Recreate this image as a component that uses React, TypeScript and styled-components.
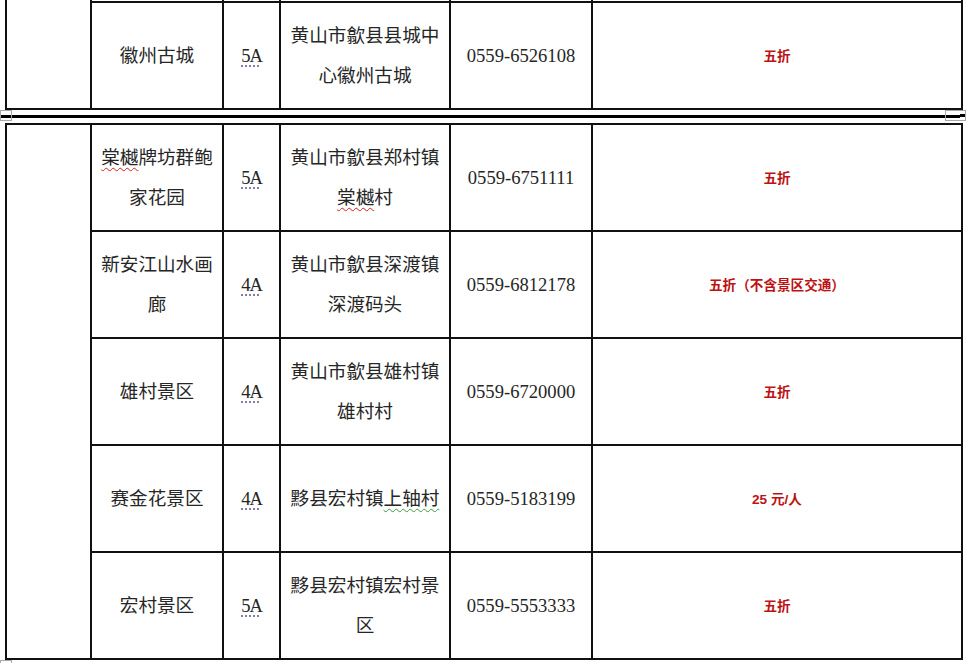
import React from 'react'
import styled, { createGlobalStyle } from 'styled-components'

const GlobalStyle = createGlobalStyle`
  html, body {
    margin: 0;
    padding: 0;
    background: #ffffff;
  }
`

const Page = styled.div`
  width: 966px;
  height: 663px;
  overflow: hidden;
  position: relative;
  background: #ffffff;
  font-family: "Liberation Serif", "Noto Sans CJK SC", serif;
  color: #262626;
`

const Sheet = styled.table`
  border-collapse: collapse;
  table-layout: fixed;
  width: 956px;
  margin-left: 5px;
`

const Cell = styled.td<{ $cut?: boolean }>`
  border: 2px solid #111111;
  ${({ $cut }) => $cut && 'border-top: none;'}
  padding: 0 8px;
  text-align: center;
  vertical-align: middle;
  font-size: 18.6px;
  line-height: 40px;
  white-space: nowrap;
`

const Row = styled.tr<{ $h: number }>`
  height: ${({ $h }) => $h}px;
`

const Level = styled.span`
  text-decoration: underline dotted #7d72a8;
  text-underline-offset: 4px;
  letter-spacing: -1px;
`

const Spell = styled.span<{ $tone: 'red' | 'green' }>`
  text-decoration: underline wavy ${({ $tone }) => ($tone === 'red' ? '#d42020' : '#3c9a3c')};
  text-decoration-thickness: 1px;
  text-underline-offset: 3px;
`

const Deal = styled.span`
  font-family: "Liberation Sans", "Noto Sans CJK SC", sans-serif;
  font-weight: 700;
  font-size: 13.6px;
  color: #bd1212;
`

const Break = styled.div`
  position: relative;
  height: 13px;
  display: flex;
  align-items: center;
`

const BreakLine = styled.div`
  width: 960px;
  height: 3px;
  background: #000000;
`

const Handle = styled.span<{ $side: 'left' | 'right' }>`
  position: absolute;
  top: 0;
  ${({ $side }) => ($side === 'left' ? 'left: 0; width: 12px;' : 'right: 0; width: 21px;')}
  height: 11px;
  border: 1px solid #a9a9a9;
  box-sizing: border-box;
  background: transparent;

  ${({ $side }) =>
    $side === 'right' &&
    `&::after {
      content: '';
      position: absolute;
      right: 0;
      top: 3px;
      width: 5px;
      height: 3px;
      background: #000;
    }`}
`

const FootHandle = styled.span`
  position: absolute;
  left: 0;
  bottom: -8px;
  width: 12px;
  height: 11px;
  border: 1px solid #a9a9a9;
  box-sizing: border-box;
`

type Entry = {
  name: React.ReactNode[]
  level: string
  address: React.ReactNode[]
  phone: string
  deal: string
}

const widths = [85, 132, 57, 170, 142, 370]

const Cols = () => (
  <colgroup>
    {widths.map((w, i) => (
      <col key={i} style={{ width: w }} />
    ))}
  </colgroup>
)

const Lines = ({ lines }: { lines: React.ReactNode[] }) => (
  <>
    {lines.map((l, i) => (
      <React.Fragment key={i}>
        {i > 0 && <br />}
        {l}
      </React.Fragment>
    ))}
  </>
)

const EntryCells = ({ e }: { e: Entry }) => (
  <>
    <Cell>
      <Lines lines={e.name} />
    </Cell>
    <Cell>
      <Level>{e.level}</Level>
    </Cell>
    <Cell>
      <Lines lines={e.address} />
    </Cell>
    <Cell>{e.phone}</Cell>
    <Cell>
      <Deal>{e.deal}</Deal>
    </Cell>
  </>
)

const first: Entry = {
  name: ['徽州古城'],
  level: '5A',
  address: ['黄山市歙县县城中', '心徽州古城'],
  phone: '0559-6526108',
  deal: '五折',
}

const entries: Entry[] = [
  {
    name: [
      <>
        <Spell $tone="red">棠樾</Spell>牌坊群鲍
      </>,
      '家花园',
    ],
    level: '5A',
    address: [
      '黄山市歙县郑村镇',
      <>
        <Spell $tone="red">棠樾</Spell>村
      </>,
    ],
    phone: '0559-6751111',
    deal: '五折',
  },
  {
    name: ['新安江山水画', '廊'],
    level: '4A',
    address: ['黄山市歙县深渡镇', '深渡码头'],
    phone: '0559-6812178',
    deal: '五折（不含景区交通）',
  },
  {
    name: ['雄村景区'],
    level: '4A',
    address: ['黄山市歙县雄村镇', '雄村村'],
    phone: '0559-6720000',
    deal: '五折',
  },
  {
    name: ['赛金花景区'],
    level: '4A',
    address: [
      <>
        黟县宏村镇<Spell $tone="green">上轴村</Spell>
      </>,
    ],
    phone: '0559-5183199',
    deal: '25 元/人',
  },
  {
    name: ['宏村景区'],
    level: '5A',
    address: ['黟县宏村镇宏村景', '区'],
    phone: '0559-5553333',
    deal: '五折',
  },
]

const App: React.FC = () => {
  return (
    <Page>
      <GlobalStyle />
      <Sheet>
        <Cols />
        <tbody>
          <Row $h={2}>
            <Cell $cut rowSpan={2} />
            <Cell $cut />
            <Cell $cut />
            <Cell $cut />
            <Cell $cut />
            <Cell $cut />
          </Row>
          <Row $h={107}>
            <EntryCells e={first} />
          </Row>
        </tbody>
      </Sheet>

      <Break>
        <BreakLine />
        <Handle $side="left" />
        <Handle $side="right" />
      </Break>

      <Sheet>
        <Cols />
        <tbody>
          {entries.map((e, i) => (
            <Row key={i} $h={107}>
              {i === 0 && <Cell rowSpan={entries.length} />}
              <EntryCells e={e} />
            </Row>
          ))}
        </tbody>
      </Sheet>
      <FootHandle />
    </Page>
  )
}

export default App
